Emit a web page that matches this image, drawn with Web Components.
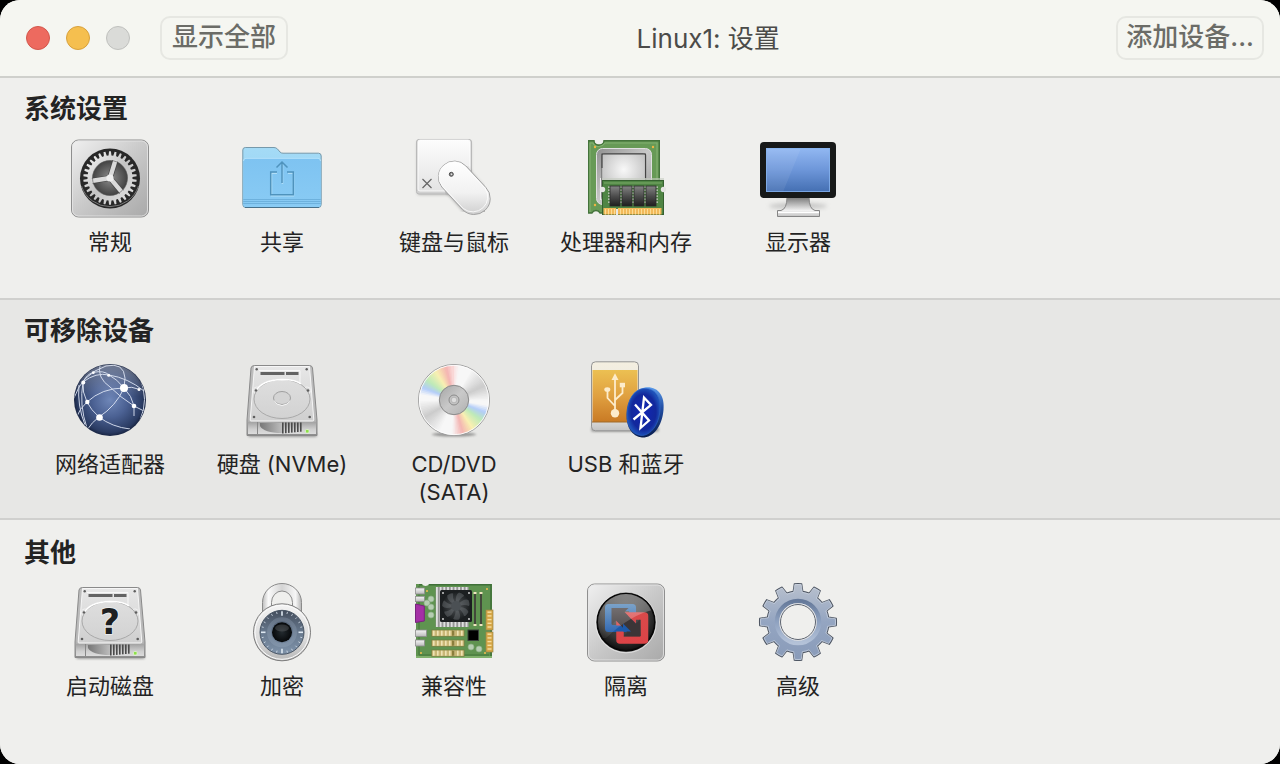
<!DOCTYPE html>
<html lang="zh-CN">
<head>
<meta charset="utf-8">
<title>Linux1: 设置</title>
<style>
  html { background: #000; }
  body { margin: 0; font-family: Inter, "Noto Sans CJK SC", sans-serif; font-feature-settings: "calt" 0; color: #232323; }
</style>
</head>
<body>
<settings-window>
  <window-toolbar slot="toolbar">
    <toolbar-button slot="start">显示全部</toolbar-button>
    Linux1: 设置
    <toolbar-button slot="end">添加设备...</toolbar-button>
  </window-toolbar>
  <settings-section heading="系统设置">
    <settings-item icon="general">常规</settings-item>
    <settings-item icon="sharing">共享</settings-item>
    <settings-item icon="input">键盘与鼠标</settings-item>
    <settings-item icon="cpu">处理器和内存</settings-item>
    <settings-item icon="display">显示器</settings-item>
  </settings-section>
  <settings-section heading="可移除设备" shaded>
    <settings-item icon="network">网络适配器</settings-item>
    <settings-item icon="disk">硬盘 (NVMe)</settings-item>
    <settings-item icon="disc">CD/DVD (SATA)</settings-item>
    <settings-item icon="usb">USB 和蓝牙</settings-item>
  </settings-section>
  <settings-section heading="其他" last>
    <settings-item icon="startup">启动磁盘</settings-item>
    <settings-item icon="lock">加密</settings-item>
    <settings-item icon="board">兼容性</settings-item>
    <settings-item icon="isolation">隔离</settings-item>
    <settings-item icon="advanced">高级</settings-item>
  </settings-section>
</settings-window>

<script>
/* ---------- drawing helpers ---------- */
const rad = d => d * Math.PI / 180;
const pt = (r, a, c = 40) => (c + r * Math.cos(rad(a))).toFixed(2) + ' ' + (c + r * Math.sin(rad(a))).toFixed(2);

// Closed outline of a gear: each tooth is a trapezoid between two radii.
function gear(n, rOut, rRoot, topHalf, baseHalf) {
  let d = '';
  for (let i = 0; i < n; i++) {
    const a = i * 360 / n - 90;
    d += (i ? 'L' : 'M') + pt(rRoot, a - baseHalf) + 'L' + pt(rOut, a - topHalf) +
         'A' + rOut + ' ' + rOut + ' 0 0 1 ' + pt(rOut, a + topHalf) + 'L' + pt(rRoot, a + baseHalf);
    d += 'A' + rRoot + ' ' + rRoot + ' 0 0 1 ' + pt(rRoot, a + 360 / n - baseHalf);
  }
  return d + 'Z';
}
const hole = r => `M${40 - r} 40a${r} ${r} 0 1 0 ${2 * r} 0a${r} ${r} 0 1 0 ${-2 * r} 0Z`;

// Thin coloured sectors blended between stops, clockwise from the top.
function sectors(stops) {
  let out = '';
  for (let a = 0; a < 360; a += 3) {
    let i = 0;
    while (stops[i + 1][0] <= a) i++;
    const [a0, c0] = stops[i], [a1, c1] = stops[i + 1], t = (a - a0) / (a1 - a0);
    const c = c0.map((v, k) => Math.round(v + (c1[k] - v) * t));
    out += `<path d="M40 40L${pt(35, a - 92)}L${pt(35, a - 87)}Z" fill="rgb(${c})"/>`;
  }
  return out;
}
const lin = (id, stops, v = 'x1="0" y1="0" x2="0" y2="1"') =>
  `<linearGradient id="${id}" ${v}>${stops.map(([o, c]) => `<stop offset="${o}" stop-color="${c}"/>`).join('')}</linearGradient>`;
const radial = (id, stops, v = '') =>
  `<radialGradient id="${id}" ${v}>${stops.map(([o, c]) => `<stop offset="${o}" stop-color="${c}"/>`).join('')}</radialGradient>`;
const soft = r => `<filter id="soft" x="-50%" y="-50%" width="200%" height="200%"><feGaussianBlur stdDeviation="${r}"/></filter>`;
const DIAG = 'x1="0" y1="0" x2="1" y2="1"';
const rects = (list, attrs) => list.map(([x, y, w, h]) => `<rect x="${x}" y="${y}" width="${w}" height="${h}" ${attrs}/>`).join('');
const dots = (list, attrs) => list.map(([x, y, r]) => `<circle cx="${x}" cy="${y}" r="${r}" ${attrs}/>`).join('');
const range = (n, f) => Array.from({ length: n }, (_, i) => f(i));

const plate = `<rect x="1.5" y="2" width="77" height="77" rx="7" fill="url(#plate)" stroke="#8f8f8f"/>
  <rect x="2.5" y="3" width="75" height="75" rx="6" fill="none" stroke="#e6e6e6" opacity=".8"/>`;
const plateDef = lin('plate', [[0, '#f0f0f0'], [.5, '#c9c9c9'], [1, '#a9a9a9']], DIAG);

const drive = mark => `<defs>
  ${lin('side', [[0, '#bdbdbd'], [.75, '#b9b9b9'], [1, '#8c8c8c']])}
  ${lin('lid', [[0, '#e7e7e7'], [1, '#cfcfcf']])}
  ${lin('platter', [[0, '#dedede'], [1, '#d2d2d2']])}
  ${lin('front', [[0, '#a2a2a2'], [.6, '#cfcfcf'], [1, '#dcdcdc']])}
  ${lin('scoop', [[0, '#777'], [1, '#bdbdbd']], 'x1="0" y1="0" x2="1" y2="0"')}
  ${soft(1)}</defs>
  <rect x="6" y="73" width="69" height="4" rx="2" fill="#555" opacity=".5" filter="url(#soft)"/>
  <path d="M12.5 5.5H67.5Q70 5.5 70.5 8L75 60V75.5H5V60L9 8Q9.5 5.5 12.5 5.5Z" fill="url(#side)" stroke="#8a8a8a"/>
  <path d="M6 62H74V74H6Z" fill="url(#front)"/>
  <path d="M12.5 6.5H67.5L71.8 60Q71.8 61 70.8 61H9Q8 61 8.2 60Z" fill="url(#lid)" stroke="#f6f6f6" stroke-width="1"/>
  <path d="M17 10.5H58V24" fill="none" stroke="#f8f8f8"/>
  <rect x="18.5" y="12" width="24" height="3" fill="#636363"/><rect x="44" y="12" width="12.5" height="3" fill="#636363"/>
  <circle cx="65" cy="30.5" r="3.6" fill="#d8d8d8" stroke="#f2f2f2"/><circle cx="15" cy="30.5" r="3.6" fill="#d8d8d8" stroke="#f2f2f2"/>
  <ellipse cx="40" cy="39" rx="28" ry="19.5" fill="url(#platter)" stroke="#a9a9a9"/>
  <path d="M13.5 32Q19 20 40 19.5Q54 19.5 59 24" fill="none" stroke="#fff" stroke-width="1.5"/>
  ${mark}
  ${dots([[14.7, 9.3, 1.2], [64.7, 9.3, 1.2], [12, 57, 1.3], [67.7, 57, 1.3], [14, 30.5, 1.3], [66, 30.5, 1.3]], 'fill="#5e5e5e"')}
  <path d="M18 63H40V73Q22 73 18 66Z" fill="url(#scoop)"/><path d="M15.5 62V74" stroke="#888"/>
  ${rects(range(7, i => [40 + i * 3, 62.5, 1.6, 11 - i * .3]), 'fill="#4b4b4b"')}
  <rect x="63.5" y="69.5" width="3.5" height="3.5" rx="1" fill="#8ee04a" stroke="#e9f7dd" stroke-width=".7"/>`;

const W = [247, 247, 247], G = [203, 203, 203], P = [244, 180, 178], Y = [249, 240, 178], N = [190, 234, 184], B = [178, 204, 250];

const ICONS = {
  general: () => `<defs>${plateDef}
    ${lin('metal', [[0, '#fafafa'], [.5, '#c4c4c4'], [1, '#e6e6e6']], DIAG)}
    ${radial('well', [[0, '#8d8d8d'], [1, '#3c3c3c']])}</defs>${plate}
    <circle cx="40" cy="40.5" r="30" fill="#282828"/><path d="M11.5 48A30 30 0 0 0 68.5 48" fill="none" stroke="#777"/>
    <circle cx="40" cy="40" r="19" fill="url(#well)"/>
    <path fill-rule="evenodd" d="${gear(30, 26.7, 22.5, 2, 3.7)}${hole(17.5)}" fill="url(#metal)"/>
    <g stroke="#444" stroke-width="5.8">${[-73, 50, 171].map(a => `<path d="M40 40L${pt(18, a)}"/>`).join('')}</g>
    <g stroke-width="4.4" fill="none">${[-73, 50, 171].map(a => `<path d="M40 40L${pt(19, a)}" stroke="#dadada"/>`).join('')}</g>
    <circle cx="40" cy="40" r="3.6" fill="#efefef"/><circle cx="40" cy="40" r="17.5" fill="none" stroke="#555" stroke-width=".6"/>`,

  sharing: () => `<defs>${lin('f', [[0, '#7ec3f1'], [1, '#89cbf4']])}${lin('b', [[0, '#a5dbf6'], [1, '#8fd0f4']])}</defs>
    <path d="M.8 12Q.8 9.5 3.3 9.5H32Q34 9.5 35.5 11L38 14Q39 15.2 41 15.2H76.5Q79.2 15.2 79.2 18V66.5Q79.2 69.5 76.2 69.5H3.8Q.8 69.5 .8 66.5Z" fill="url(#b)" stroke="#7699ab"/>
    <path d="M1.3 23Q1.3 20.5 4 20.5H76Q78.7 20.5 78.7 23V66.5Q78.7 69 76 69H4Q1.3 69 1.3 66.5Z" fill="url(#f)"/>
    <path d="M1.5 23Q1.5 20.3 4 20.3H76Q78.5 20.3 78.5 23" fill="none" stroke="#b4e2fa"/>
    <path d="M1.3 61.5H78.7M1.3 63.5H78.7M1.3 65.5H78.7" stroke="#6aaeda" stroke-width=".9"/>
    <path d="M3 69.5H77" stroke="#47708a"/>
    <g fill="none" stroke-width="1.5"><path d="M35 35.2H29.5V57.7H51.5V35.2H46M40.5 46V25" stroke="#b0def8"/>
    <path d="M35 34H28.7V56.7H51.3V34H45M40 45V24M34.5 29.5L40 24L45.5 29.5" stroke="#4f93bd"/></g>`,

  input: () => `<defs>${soft(1.4)}${lin('key', [[0, '#fdfdfd'], [1, '#e3e3e3']])}${lin('mouse', [[0, '#fff'], [.6, '#f1f1f1'], [1, '#cfcfcf']])}</defs>
    <rect x="3" y="3" width="54" height="54" rx="3" fill="#888" opacity=".5" filter="url(#soft)"/>
    <rect x="2.5" y="1.5" width="55" height="54.5" rx="2.5" fill="#d0d0d0" stroke="#b9b9b9"/>
    <rect x="4" y="2" width="52" height="51" rx="2" fill="url(#key)" stroke="#fff" stroke-width=".8"/>
    <path d="M8.500 41L17.5 50M17.5 41L8.5 50" stroke="#666" stroke-width="1.2"/>
    <path d="M41 40L61 62.5" stroke="#666" stroke-width="32" stroke-linecap="round" opacity=".5" filter="url(#soft)"/>
    <path d="M51.8 27.9L71.8 49.4A16 16 0 0 1 48.5 71.5L27.8 49A16 16 0 0 1 51.8 27.9Z" fill="url(#mouse)" stroke="#a2a2a2"/>
    <path d="M51 28.9L71 50.2A15 15 0 0 1 49.3 70.5L28.7 48.5A14.8 14.8 0 0 1 51 28.9Z" fill="none" stroke="#fff" opacity=".8"/>
    <circle cx="37.3" cy="36.3" r="2" fill="#8b8b8b" stroke="#4b4b4b"/><circle cx="37.6" cy="36.3" r=".7" fill="#eee"/>`,

  cpu: () => `<defs>${lin('frame', [[0, '#909090'], [.5, '#c9c9c9'], [1, '#989898']], DIAG)}
    ${radial('cap', [[0, '#f8f8f8'], [1, '#bebebe']], 'cx=".5" cy=".35" r=".6"')}${lin('chip', [[0, '#858585'], [.5, '#4d4d4d'], [1, '#1e1e1e']])}</defs>
    <path d="M2 2H8A5 4.5 0 0 0 18 2H74V75H14A4.5 4.5 0 0 0 6 75H2Z" fill="#679a56"/>
    <path d="M2 2.700H8A5 4.5 0 0 0 18 2.7H73.3V75H14A4.5 4.5 0 0 0 6 75H2.7V2" fill="none" stroke="#44733b" stroke-width="1.4"/>
    <path d="M4 74V5H7Q9 9 13 8.5Q17 8 19 5H71V74" fill="none" stroke="#82b070" stroke-width="1.2"/>
    <rect x="10.5" y="10.5" width="55" height="56" rx="6" fill="url(#frame)" stroke="#e0e0e0"/>
    <rect x="15.7" y="15.5" width="44" height="46" rx="2" fill="url(#cap)" stroke="#777"/>
    <path d="M16 30V16H59.500V40" fill="none" stroke="#444" stroke-width="1.1"/><path d="M14.5 40V62" stroke="#eee"/>
    ${dots([[9, 9, 1.2], [67, 9, 1.2], [9, 67, 1.2]], 'fill="#f0b443"')}
    <rect x="16" y="40" width="62" height="2" fill="#c4cbc0" opacity=".6"/>
    <rect x="16.5" y="42.500" width="61" height="34" fill="#4f8544" stroke="#35602f"/>
    <path d="M18 45H76" stroke="#7cac69" stroke-width="1"/>
    ${dots([[16.5, 51.5, 2.700], [77.5, 51.5, 2.700]], 'fill="#e4e4e2"')}
    ${rects([...range(6, i => [22, 48.5 + i * 3, 50, 1.3])], 'fill="#c9cfc3"')}
    ${rects([[24, 48, 10, 20], [36, 48, 10, 20], [48, 48, 10, 20], [60, 48, 10, 20]], 'fill="url(#chip)" stroke="#292929" stroke-width=".8"')}
    <rect x="17.5" y="70" width="12.5" height="6.5" fill="#f2b95a"/><rect x="32" y="70" width="43.5" height="6.5" fill="#f2b95a"/>
    ${rects(range(19, i => [19 + i * 3, 71, 1, 5.5]), 'fill="#fbdc94"')}<rect x="30" y="71" width="2" height="6.5" fill="#e8e8e4"/>`,

  display: () => `<defs>${soft(2)}${lin('scr', [[0, '#92b8f2'], [.5, '#6d96d9'], [1, '#446fb2']])}${lin('std', [[0, '#777'], [.35, '#b4b4b4'], [.7, '#f2f2f2'], [1, '#c2c2c2']])}</defs>
    <ellipse cx="40" cy="68" rx="29" ry="3" fill="#999" opacity=".5" filter="url(#soft)"/>
    <path d="M29 59H51Q51 71 57 72.5H61.5V78.5H19.5V72.5H23Q29 71 29 59Z" fill="url(#std)" stroke="#858585"/>
    <path d="M20 74.5H61" stroke="#fff"/><rect x="2" y="4" width="76" height="56" rx="4" fill="#171919"/>
    <rect x="8" y="10" width="64" height="44" fill="url(#scr)"/><path d="M8 10H43L25 54H8Z" fill="#fff" opacity=".07"/>
    <rect x="8.5" y="10.5" width="63" height="43" fill="none" stroke="#86b3ee" opacity=".8"/>`,

  network: () => `<defs>${radial('globe', [[0, '#6f87b8'], [.45, '#4b6193'], [.85, '#2a3b62'], [1, '#0f1830']], 'cx=".5" cy=".5" r=".53"')}
    ${lin('gl', [[0, 'rgba(255,255,255,.35)'], [.45, 'rgba(255,255,255,0)']])}<clipPath id="c"><circle cx="40" cy="40" r="35.5"/></clipPath></defs>
    <circle cx="40" cy="40" r="36" fill="url(#globe)"/><circle cx="40" cy="40" r="35.5" fill="url(#gl)"/>
    <g clip-path="url(#c)" fill="none" stroke="#dfe6f5" stroke-width="1" opacity=".9">
      <path d="M4 38Q12 14 36 6Q54 2 55 18L54 28Q62 36 64 46L76 52"/><path d="M54 28Q32 28 17 42Q10 48 6 58"/>
      <path d="M54 28Q46 46 29 57Q22 62 17 70"/><path d="M17 42Q21 50 29 57Q42 67 60 69"/>
      <path d="M13 22Q26 12 39 15Q58 18 74 31"/><path d="M30 5Q27 18 40 27Q50 37 64 46V56"/>
      <path d="M17 42Q12 32 13 22Q17 14 23 12.5Q34 10 39 15Q47 19 54 28Q62 26 69 29.3"/>
      <path d="M9 25Q7 45 15 65M13 22Q9 45 17 68"/><path d="M70 18Q79 40 70 60"/></g>
    ${dots([[54, 28, 4], [29.5, 57.5, 3.3], [17.3, 42, 2.2], [64, 46, 2.3], [13.3, 22.5, 2], [38.7, 15.3, 1.5], [23.3, 12.7, 1.4], [69, 29.5, 1.5]], 'fill="#fff"')}`,

  disk: () => drive(`<ellipse cx="40" cy="38" rx="8.5" ry="6.5" fill="#d4d4d4" stroke="#a0a0a0"/><path d="M32 40.5Q34 45 40 45.5Q46 45 48 40.5" fill="none" stroke="#f5f5f5"/>`),
  startup: () => drive(`<text x="40" y="52" text-anchor="middle" font-family="DejaVu Sans, sans-serif" font-weight="700" font-size="35" fill="#1d1f21" stroke="#f0f0f0" stroke-width="1.5" paint-order="stroke">?</text>`),

  disc: () => `<defs>${soft(1.2)}${lin('hub', [[0, '#a5a5a5'], [.5, '#c9c9c9'], [1, '#b0b0b0']], DIAG)}<clipPath id="c"><circle cx="40" cy="40" r="34.7"/></clipPath></defs>
    <ellipse cx="40" cy="74.5" rx="22" ry="2" fill="#444" opacity=".5" filter="url(#soft)"/>
    <circle cx="40" cy="40" r="35.5" fill="#f4f4f4" stroke="#9a9a9a"/>
    <g clip-path="url(#c)">${sectors([[0, [250, 225, 225]], [10, W], [30, W], [65, G], [92, W], [100, W], [112, B], [127, N], [147, Y], [166, P], [184, W], [205, W], [240, G], [270, W], [280, W], [292, B], [307, N], [328, Y], [347, P], [360, [250, 225, 225]]])}</g>
    <circle cx="40" cy="40" r="34.7" fill="none" stroke="#fff" stroke-width=".8"/>
    <circle cx="40" cy="40" r="14.7" fill="url(#hub)" stroke="#8b8b8b"/><circle cx="40" cy="40" r="5" fill="#c4c4c4" stroke="#8b8b8b"/>
    <circle cx="40" cy="40" r="2.8" fill="#ddd" stroke="#aaa" stroke-width=".7"/>`,

  usb: () => `<defs>${soft(1.2)}${lin('o', [[0, '#ecc052'], [.5, '#e0a040'], [1, '#c97a24']])}${lin('w', [[0, '#f4efe0'], [.8, '#e3e3e3'], [1, '#c2c2c2']])}
    ${radial('bt', [[0, '#1226b4'], [.75, '#12289c'], [1, '#1d50b8']])}${lin('edge', [[0, '#5b9bea'], [.4, '#2350a5'], [1, '#081c4c']])}</defs>
    <rect x="5" y="67" width="68" height="5" rx="2" fill="#666" opacity=".5" filter="url(#soft)"/>
    <rect x="5.5" y="1.8" width="47" height="69" rx="4" fill="url(#w)" stroke="#949494"/>
    <rect x="6.5" y="10" width="45" height="52" fill="url(#o)"/><path d="M6 62H52" stroke="#9f6a2a"/>
    <g stroke="#fdeccb" stroke-width="1.8" fill="none"><path d="M29 17V53M29 46L21.5 38V30M29 40L36.5 33V25"/></g>
    <g fill="#fdeccb"><path d="M25.5 20L29 13.3L32.5 20Z"/><circle cx="29" cy="53.3" r="4.2"/><ellipse cx="21.3" cy="29.5" rx="3" ry="2.3"/><rect x="33.8" y="22.8" width="5.2" height="4.5"/></g>
    <path d="M59 27.5C72 26 79 36 77.5 50C76 67 67 78 56 77.5C46 76.5 40 67 40.5 54C41 39 48 29 59 27.5Z" fill="url(#edge)"/>
    <path d="M57.5 28.5C69 27.5 75 37 74 50C73 65 64.5 76 55 75.5C46 74.5 40.5 66 41 54C41.5 40 48 29.5 57.5 28.5Z" fill="url(#bt)" stroke="#2f63c4" stroke-width=".6"/>
    <path d="M49 44.5L63 60.5L54.5 68L58 37.5L65 45L47.5 59.5" fill="none" stroke="#fff" stroke-width="2.3"/>`,

  lock: () => `<defs>${lin('sh', [[0, '#bdbdbd'], [.15, '#fafafa'], [.5, '#d4d4d4'], [.85, '#f6f6f6'], [1, '#b4b4b4']], 'x1="0" y1="0" x2="1" y2="0"')}
    ${lin('body', [[0, '#f4f4f4'], [.6, '#dcdcdc'], [1, '#b9b9b9']])}${lin('dial', [[0, '#434d5c'], [.5, '#67788d'], [1, '#7f93aa']])}
    ${radial('knob', [[0, '#232a2f'], [1, '#06080a']])}</defs>
    <path d="M20.5 38V20.500A19.5 19 0 0 1 59.5 20.500V38H50.5V20.500A10.5 11.500 0 0 0 29.5 20.500V38Z" fill="url(#sh)" stroke="#8a8a8a"/>
    <circle cx="40" cy="50.3" r="28.5" fill="url(#body)" stroke="#7c7c7c"/><circle cx="40" cy="50.3" r="27" fill="none" stroke="#fbfbfb" stroke-width="1"/>
    <circle cx="40" cy="50.3" r="22" fill="url(#dial)" stroke="#4a5665" stroke-width="1"/>
    <g transform="translate(0 10.3)" stroke="#dfe9f2">${range(24, i => `<path d="M${pt(i % 6 ? 19 : 16.5, i * 15)}L${pt(21, i * 15)}" stroke-width="${i % 6 ? .8 : 1.6}"/>`).join('')}</g>
    <circle cx="40" cy="50.3" r="13" fill="none" stroke="#a2b3c6" opacity=".25" stroke-width="4"/>
    <circle cx="40" cy="50.3" r="10" fill="url(#knob)"/><ellipse cx="40" cy="46" rx="7" ry="3.5" fill="#fff" opacity=".14"/>`,

  board: () => `<defs>${radial('fan', [[0, '#55595c'], [1, '#191c1e']])}${lin('port', [[0, '#f6f6f6'], [1, '#bababa']])}</defs>
    <path d="M2 2H8A4 4 0 0 0 15 2H78V76H2Z" fill="#5f9350"/><path d="M5 2.8H8M15 2.8H77V75" fill="none" stroke="#3f7038" stroke-width="1.5"/><path d="M5 4V73H75" fill="none" stroke="#437539"/>
    <path d="M2 75H78" stroke="#80b16c" stroke-width="2"/>
    <rect x="21.7" y="5" width="33" height="40" fill="#969696"/>${rects(range(9, i => [22 + i * 3.7, 5, 1.8, 40]), 'fill="#e0e0e0"')}
    <rect x="26" y="8" width="32" height="32" rx="1.5" fill="#1c1f21"/><circle cx="42" cy="24" r="14.5" fill="url(#fan)"/>
    <g fill="#777c80" opacity=".4">${range(7, i => `<path transform="rotate(${i * 51.4} 42 24)" d="M42 20Q41 13 45 10.5Q50 12 50 14Q46 16 44 21Z"/>`).join('')}</g>
    <circle cx="42" cy="24" r="5" fill="#4b5054"/>${dots([[29, 11, .9], [55, 11, .9], [29, 37, .9], [55, 37, .9]], 'fill="#e0e0e0"')}
    ${rects([[60, 10, 2, 33], [66, 10, 2, 33]], 'fill="#43483b"')}${rects([[59.5, 10, 3, 2], [65.5, 10, 3, 2], [59.5, 42, 3, 2], [65.5, 42, 3, 2]], 'fill="#f1e6c0"')}
    ${rects([[1.5, 6, 9, 6], [1.5, 14.3, 9, 5.3], [1.5, 48, 11, 6.5], [1.5, 58, 9, 6]], 'fill="url(#port)" stroke="#8e8e8e" stroke-width=".8"')}
    <path d="M1.5 22L10.3 24V39L1.5 40.5Z" fill="#a430a5" stroke="#77257d"/>
    ${dots([[17, 17, 3], [13, 21, 3], [17, 25, 3], [17, 33, 3], [57, 65, 3], [65, 67, 3]], 'fill="#b5cdb1" stroke="#8dad86" stroke-width=".7"')}
    ${rects([[17.7, 48, 32.5, 6.3], [17.7, 58, 32.5, 6.3], [17.7, 68, 32.5, 6.3]], 'fill="#c9b776" stroke="#6d7c3f" stroke-width=".7"')}
    ${[48, 58, 68].map(y => rects(range(8, i => [19 + i * 4, y + .7, 1.6, 5]), 'fill="#eee3b4"') + rects([[38, y + .5, 2.5, 5.3]], 'fill="#8b7e3c"')).join('')}
    <rect x="54" y="48" width="10.5" height="10.5" fill="#000" stroke="#39433b"/>
    ${rects([[72, 28, 7, 20], [72, 50, 7, 20]], 'fill="#d6a646" stroke="#9c8848" stroke-width=".7"')}
    ${rects([...range(5, i => [73.5, 29.5 + i * 3.7, 4, 1.4]), ...range(5, i => [73.5, 51.5 + i * 3.7, 4, 1.4])], 'fill="#f8dfa0"')}
    ${dots([[13, 9, 1], [73, 7, 1], [7, 71, 1], [71, 71, 1]], 'fill="#f3bd4e"')}`,

  isolation: () => `<defs>${plateDef}${radial('ball', [[0, '#5d5d5d'], [.7, '#343434'], [1, '#111']], 'cx=".5" cy=".4" r=".6"')}
    <linearGradient id="blue" gradientUnits="userSpaceOnUse" x1="0" y1="22" x2="0" y2="50"><stop offset="0" stop-color="#3f78b0"/><stop offset="1" stop-color="#1b58aa"/></linearGradient>
    <linearGradient id="red" gradientUnits="userSpaceOnUse" x1="0" y1="30" x2="0" y2="62"><stop offset="0" stop-color="#d94a4a"/><stop offset="1" stop-color="#dc4347"/></linearGradient>
    ${lin('shine', [[0, 'rgba(255,255,255,.4)'], [1, 'rgba(255,255,255,.06)']])}<clipPath id="c"><circle cx="40" cy="40" r="28"/></clipPath></defs>${plate}
    <circle cx="40" cy="40" r="29.8" fill="#080808"/><circle cx="40" cy="40" r="28" fill="url(#ball)"/><circle cx="40" cy="40.5" r="30.3" fill="none" stroke="#f3f3f3" stroke-width=".6"/>
    <g fill="none" stroke-linejoin="round"><rect x="22.5" y="25.5" width="24" height="21" stroke="url(#blue)" stroke-width="7"/>
    <rect x="34" y="34" width="24.500" height="24" stroke="url(#red)" stroke-width="7.5"/>
    <path d="M30 46.500H47V38" stroke="#1d5aab" stroke-width="6"/></g>
    <path d="M25.500 26H42.500L38.500 30L50 41.500L54 37.500V54.500H37.500L41.500 50.500L30 38.500L25.500 42.500Z" fill="#3b3537"/>
    <path d="M37 41.500L45 49.500H37Z" fill="#1d5aab"/><path d="M42 33.500L50 41.500V33.500Z" fill="#d94a4a"/>
    <g clip-path="url(#c)"><path d="M10 10H70V27Q45 32 20 56H10Z" fill="url(#shine)"/></g>`,

  advanced: () => `<defs>${lin('g', [[0, '#b9c1ce'], [.5, '#94a5c1'], [1, '#899bb9']])}${lin('in', [[0, '#65799a'], [.5, '#8fa2c0'], [1, '#b4c2d8']])}</defs>
    <path fill-rule="evenodd" d="${gear(12, 38.5, 31, 5.5, 9)}${hole(18)}" fill="url(#g)" stroke="#4f5764" stroke-width="1.1" stroke-linejoin="round"/>
    <path d="${gear(12, 37.5, 30, 5, 8.3)}" fill="none" stroke="#d3dbe7" stroke-width=".8" opacity=".8"/>
    <circle cx="40" cy="40" r="21" fill="none" stroke="url(#in)" stroke-width="4.5"/><circle cx="40" cy="40" r="18" fill="none" stroke="#f4f4f4" stroke-width="1.5"/>
    <circle cx="40" cy="40" r="17.5" fill="none" stroke="#4f5764" stroke-width=".9"/>`
};

/* ---------- elements ---------- */
class BaseElement extends HTMLElement {
  constructor() {
    super();
    this.attachShadow({ mode: 'open' });
  }
  connectedCallback() { this.shadowRoot.innerHTML = this.render(); }
}

customElements.define('settings-icon', class extends BaseElement {
  render() {
    return `<style>:host { display: block; width: 80px; height: 80px; } svg { display: block; }</style>
      <svg viewBox="0 0 80 80" width="80" height="80" aria-hidden="true">${ICONS[this.getAttribute('name')]()}</svg>`;
  }
});

customElements.define('settings-item', class extends BaseElement {
  render() {
    return `<style>
      :host { display: block; }
      button { display: flex; flex-direction: column; align-items: center; gap: 10px; width: 100%; padding: 0 8px;
        border: 0; background: none; font: inherit; font-feature-settings: inherit; font-size: 22px; line-height: 28px; color: inherit; text-align: center; }
      span { min-height: 56px; }
    </style>
    <button type="button"><settings-icon name="${this.getAttribute('icon')}"></settings-icon><span><slot></slot></span></button>`;
  }
});

customElements.define('settings-section', class extends BaseElement {
  render() {
    return `<style>
      :host { display: block; padding: 12px 24px 14px; background: #efefed; border-bottom: 2px solid #d0d0ce; }
      :host([shaded]) { background: #e7e7e5; padding-bottom: 12px; }
      :host([last]) { flex: 1; padding-top: 14px; border-bottom: 0; }
      h2 { margin: 0 0 10px; font-size: 26px; line-height: 38px; font-weight: 700; }
      .grid { display: grid; grid-template-columns: repeat(auto-fill, 172px); }
    </style>
    <section><h2>${this.getAttribute('heading')}</h2><div class="grid"><slot></slot></div></section>`;
  }
});

customElements.define('toolbar-button', class extends BaseElement {
  render() {
    return `<style>
      :host { display: block; }
      button { display: block; height: 44px; padding: 0 8px 2px; border: 2px solid #e6e7e2; border-radius: 10px;
        background: #f5f6f1; color: #6b6c67; font: inherit; font-size: 26px; font-weight: 500; line-height: 38px; white-space: nowrap; }
      :host([slot="start"]) button { padding: 0 10px 2px; }
    </style><button type="button"><slot></slot></button>`;
  }
});

customElements.define('traffic-lights', class extends BaseElement {
  render() {
    return `<style>
      :host { display: flex; gap: 16px; }
      button { width: 24px; height: 24px; padding: 0; border: 1px solid #d3574c; border-radius: 50%; background: #ed6a5f; }
      .min { background: #f5bf4f; border-color: #d8a13c; }
      .max { background: #dadbd8; border-color: #c0c1be; }
    </style>
    <button type="button" aria-label="关闭"></button><button type="button" class="min" aria-label="最小化"></button><button type="button" class="max" aria-label="缩放" disabled></button>`;
  }
});

customElements.define('window-toolbar', class extends BaseElement {
  render() {
    return `<style>
      :host { display: block; }
      header { display: flex; align-items: center; height: 76px; padding: 0 16px 0 26px; background: #f5f6f1; border-bottom: 2px solid #cfd0cc; }
      ::slotted([slot="start"]) { margin-left: 30px; }
      h1 { flex: 1; margin: 0; padding: 2px 0 0 12px; font-size: 26px; line-height: 38px; font-weight: 400; text-align: center; color: #4b4b49; }
    </style>
    <header><traffic-lights></traffic-lights><slot name="start"></slot><h1><slot></slot></h1><slot name="end"></slot></header>`;
  }
});

customElements.define('settings-window', class extends BaseElement {
  render() {
    return `<style>
      :host { display: flex; flex-direction: column; min-height: 100vh; border-radius: 20px; overflow: hidden; background: #efefed; }
    </style><slot name="toolbar"></slot><slot></slot>`;
  }
});
</script>
</body>
</html>
